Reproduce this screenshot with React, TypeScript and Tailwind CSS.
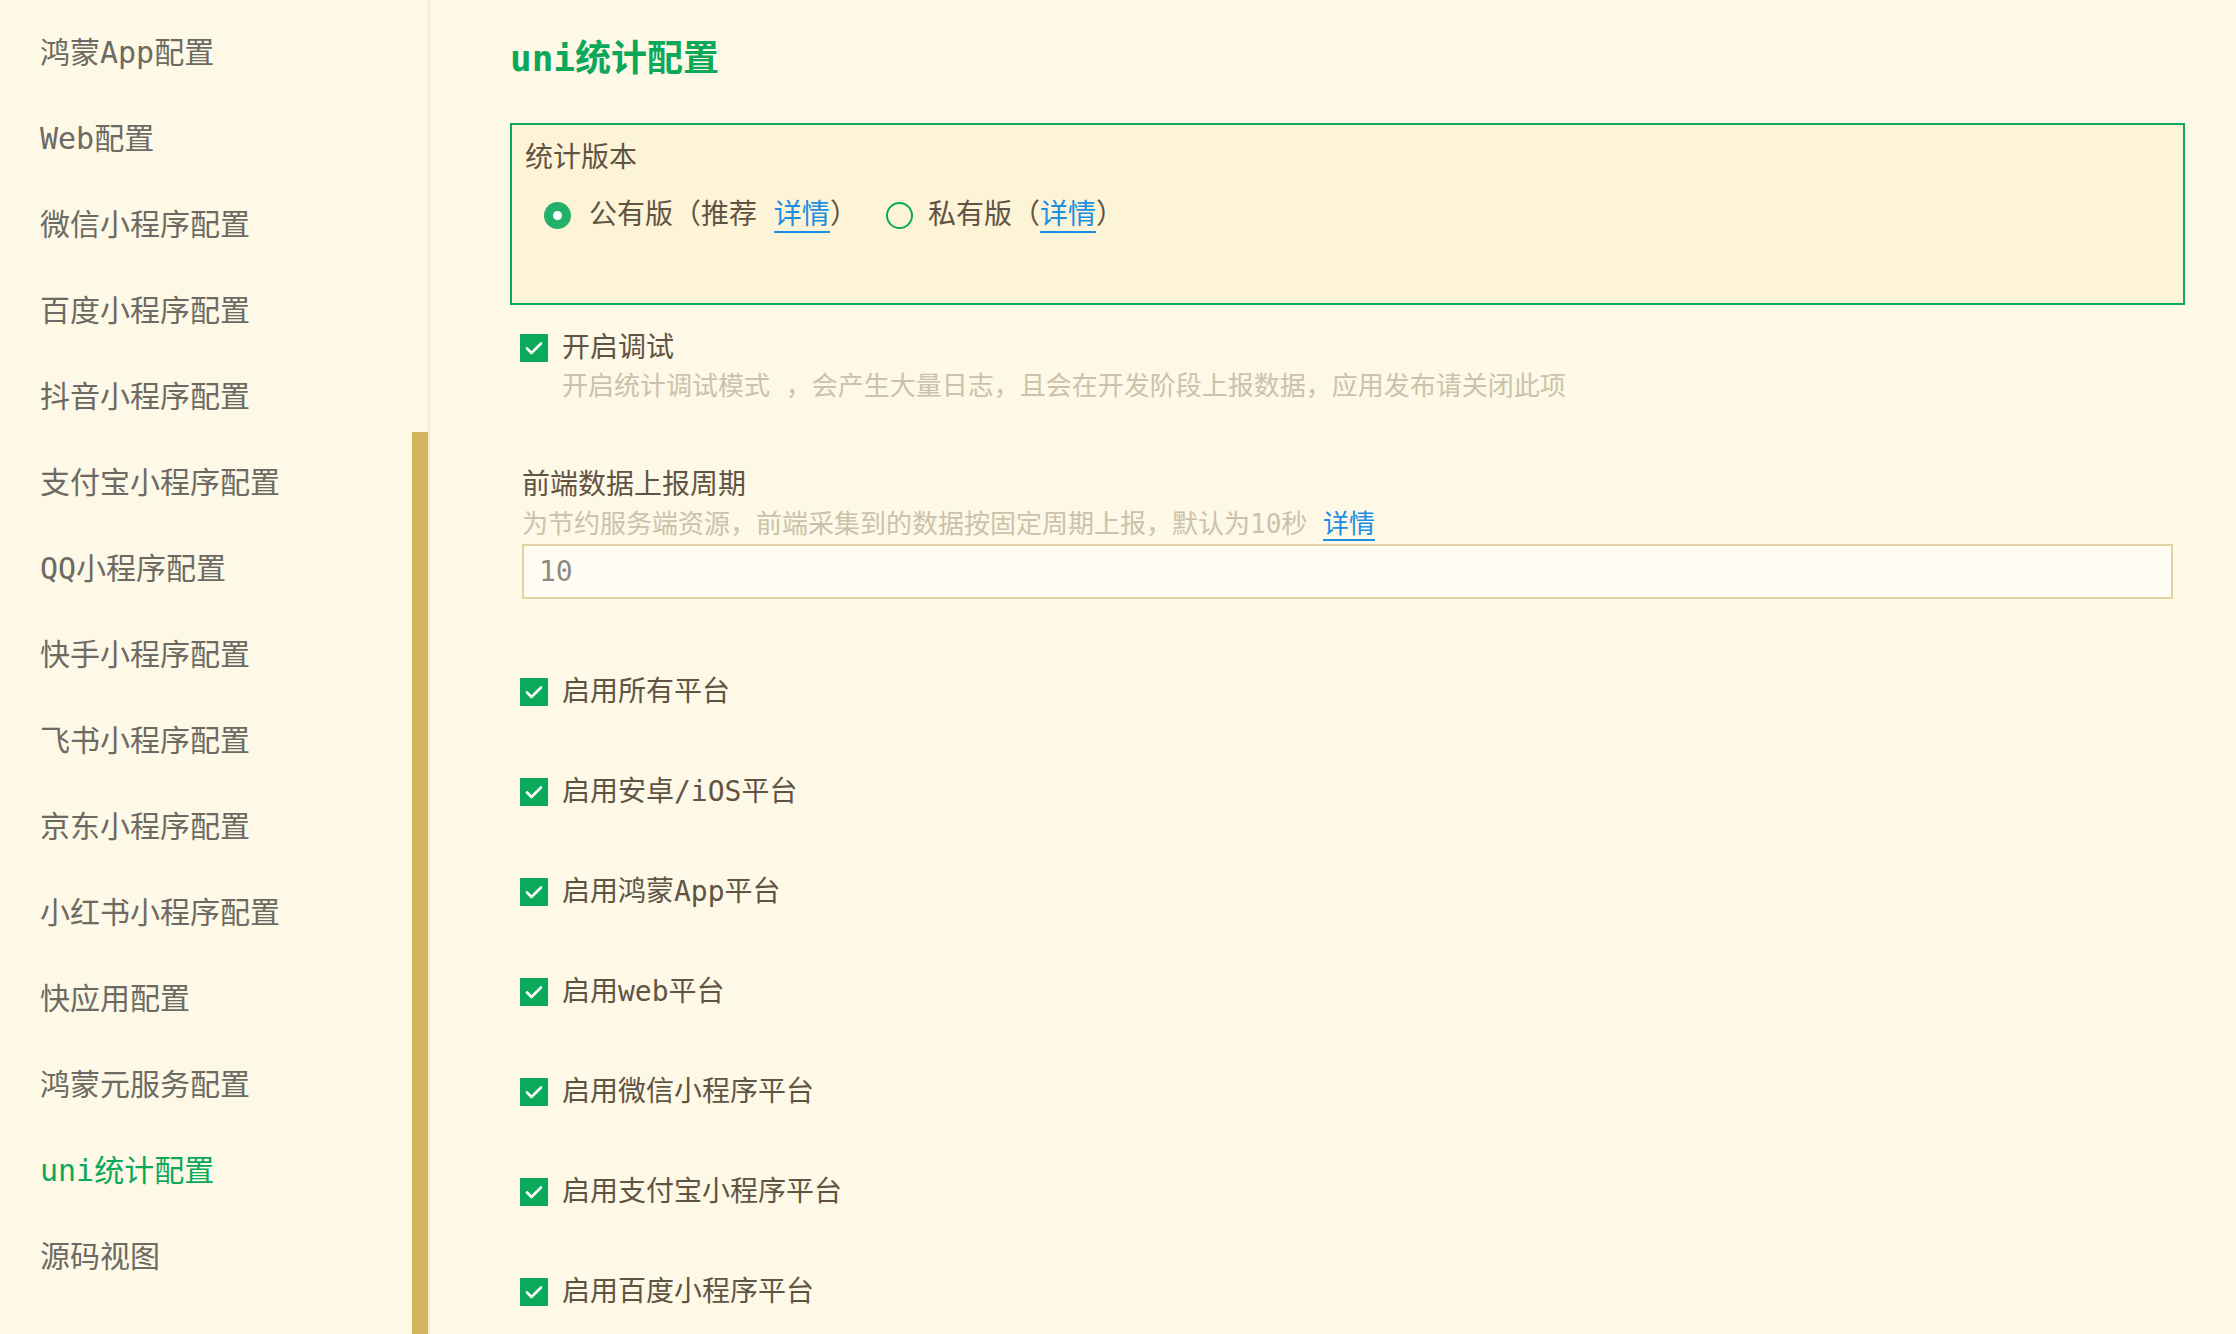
import React from "react"

const menu = [
  "鸿蒙App配置",
  "Web配置",
  "微信小程序配置",
  "百度小程序配置",
  "抖音小程序配置",
  "支付宝小程序配置",
  "QQ小程序配置",
  "快手小程序配置",
  "飞书小程序配置",
  "京东小程序配置",
  "小红书小程序配置",
  "快应用配置",
  "鸿蒙元服务配置",
  "uni统计配置",
  "源码视图",
]

const platforms = [
  "启用所有平台",
  "启用安卓/iOS平台",
  "启用鸿蒙App平台",
  "启用web平台",
  "启用微信小程序平台",
  "启用支付宝小程序平台",
  "启用百度小程序平台",
]

const font = { fontFamily: '"DejaVu Sans Mono", "Noto Sans CJK SC", monospace' }

function Check() {
  return (
    <span className="flex h-[28px] w-[28px] shrink-0 items-center justify-center bg-[#0baa5b]">
      <svg width="18" height="14" viewBox="0 0 18 14" fill="none">
        <path d="M2 7.5l4.5 4.5L16 2.5" stroke="#fff" strokeWidth="2.6" strokeLinecap="round" strokeLinejoin="round" />
      </svg>
    </span>
  )
}

function Link({ children }: { children: React.ReactNode }) {
  return <span className="border-b-2 border-[#1a8fe3] text-[#1a8fe3]">{children}</span>
}

export default function App() {
  return (
    <div className="flex h-[1334px] w-full overflow-hidden bg-[#fef8e6]" style={font}>
      {/* side menu */}
      <aside className="relative w-[430px] shrink-0 border-r-2 border-[#f6ebcd] pt-[10px]">
        {menu.map((m) => (
          <div
            key={m}
            className={`flex h-[86px] items-center pl-[40px] text-[30px] leading-[30px] ${
              m === "uni统计配置" ? "text-[#0aa858]" : "text-[#6c6a62]"
            }`}
          >
            {m}
          </div>
        ))}
        <div className="absolute right-0 top-[432px] bottom-0 w-[16px] bg-[#d4b55e]" />
      </aside>

      {/* settings */}
      <main className="flex-1 pl-[80px] pr-[51px] pt-[41px]">
        <h1 className="text-[36px] font-bold leading-[36px] text-[#0aa858]">uni统计配置</h1>

        <section className="mt-[46px] h-[182px] border-2 border-[#0baa5b] bg-[#fdf3d6] pl-[13px] pt-[19px]">
          <div className="text-[28px] leading-[28px] text-[#5f5444]">统计版本</div>
          <div className="mt-[27px] flex items-center pl-[19px] text-[28px] leading-[32px] text-[#5f5444]">
            <span className="flex h-[27px] w-[27px] items-center justify-center rounded-full bg-[#22b06a]">
              <span className="h-[9px] w-[9px] rounded-full bg-white" />
            </span>
            <span className="ml-[18px]">公有版（推荐 <Link>详情</Link>）</span>
            <span className="ml-[28px] h-[27px] w-[27px] rounded-full border-2 border-[#0baa5b]" />
            <span className="ml-[15px]">私有版（<Link>详情</Link>）</span>
          </div>
        </section>

        <div className="mt-[29px] pl-[10px]">
          <div className="flex items-center gap-[14px]">
            <Check />
            <span className="text-[28px] leading-[28px] text-[#5f5444]">开启调试</span>
          </div>
          <div className="mt-[11px] pl-[42px] text-[26px] leading-[26px] text-[#cbc2ab]">
            开启统计调试模式 ，会产生大量日志，且会在开发阶段上报数据，应用发布请关闭此项
          </div>
        </div>

        <div className="mt-[72px] pl-[12px] pr-[12px]">
          <div className="text-[28px] leading-[28px] text-[#5f5444]">前端数据上报周期</div>
          <div className="mt-[11px] text-[26px] leading-[28px] text-[#cbc2ab]">
            为节约服务端资源，前端采集到的数据按固定周期上报，默认为10秒 <Link>详情</Link>
          </div>
          <div className="mt-[6px] flex h-[55px] items-center border-2 border-[#e2d2a4] bg-[#fffcf3] pl-[15px] text-[28px] text-[#8c8a82]">
            10
          </div>
        </div>

        <div className="mt-[43px] pl-[10px]">
          {platforms.map((p) => (
            <div key={p} className="flex h-[100px] items-center gap-[14px]">
              <Check />
              <span className="text-[28px] leading-[28px] text-[#5f5444]">{p}</span>
            </div>
          ))}
        </div>
      </main>
    </div>
  )
}
